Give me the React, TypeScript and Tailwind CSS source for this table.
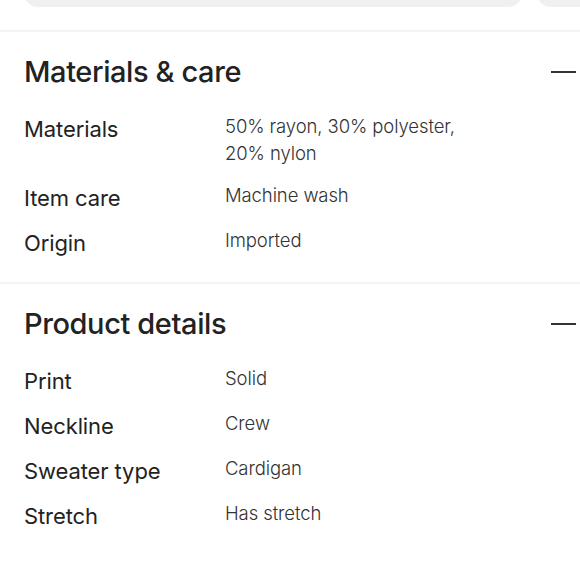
import React from "react";

const font = { fontFamily: "Inter, 'Noto Sans', sans-serif" };

function Row({ label, value }: { label: string; value: React.ReactNode }) {
  return (
    <div className="flex items-start">
      <div className="w-[201px] shrink-0 text-[22px] leading-[28px] text-[#222222] font-normal tracking-[-0.1px]">{label}</div>
      <div className="text-[18.5px] leading-[27px] text-[#333333] font-light -mt-[2px] tracking-[-0.1px]">{value}</div>
    </div>
  );
}

function Section({ title, rows }: { title: string; rows: [string, React.ReactNode][] }) {
  return (
    <div className="pl-6 pt-[20px]">
      <div className="flex items-center justify-between">
        <h2 className="text-[29px] leading-[40px] font-medium text-[#222222] tracking-[-0.4px]">{title}</h2>
        <div className="w-[25px] h-[2px] bg-[#333333] mr-[4px]" />
      </div>
      <div className="mt-[23px] flex flex-col gap-[17px]">
        {rows.map(([l, v]) => (
          <Row key={l} label={l} value={v} />
        ))}
      </div>
    </div>
  );
}

export default function App() {
  return (
    <div className="w-[580px] h-[580px] bg-white overflow-hidden" style={font}>
      <div className="flex gap-[15px] pl-[24px] -mt-[30px] h-[37px]">
        <div className="w-[498px] shrink-0 h-[37px] rounded-[14px] bg-[#eef0f2]" />
        <div className="w-[100px] shrink-0 h-[37px] rounded-[14px] bg-[#eef0f2]" />
      </div>
      <div className="h-[23px]" />
      <div className="h-[2px] bg-[#f4f4f4]" />
      <Section
        title="Materials & care"
        rows={[
          ["Materials", <>50% rayon, 30% polyester,<br />20% nylon</>],
          ["Item care", "Machine wash"],
          ["Origin", "Imported"],
        ]}
      />
      <div className="h-[25px]" />
      <div className="h-[2px] bg-[#f4f4f4]" />
      <Section
        title="Product details"
        rows={[
          ["Print", "Solid"],
          ["Neckline", "Crew"],
          ["Sweater type", "Cardigan"],
          ["Stretch", "Has stretch"],
        ]}
      />
    </div>
  );
}
